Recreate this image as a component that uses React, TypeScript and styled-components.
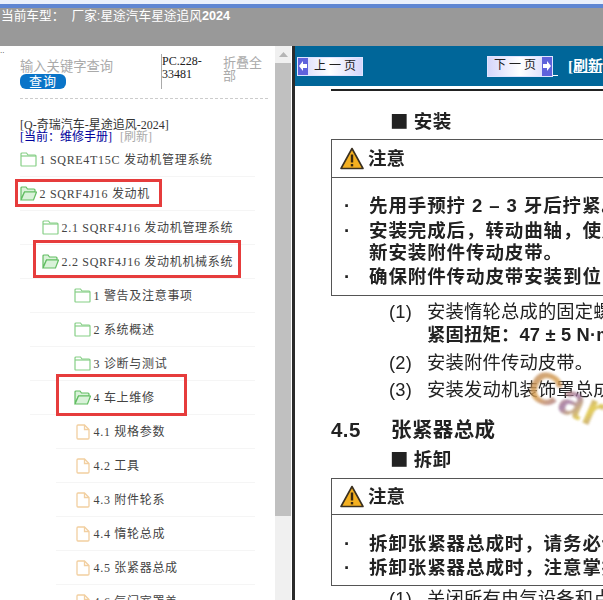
import styled, { createGlobalStyle } from "styled-components";

const GlobalStyle = createGlobalStyle`
  html, body { margin: 0; padding: 0; background: #fff; overflow: hidden; }
  * { box-sizing: border-box; }
`;

const serif = `"Liberation Serif", "Noto Sans CJK SC", serif`;
const sans = `"Liberation Sans", "Noto Sans CJK SC", sans-serif`;
const cjk = `"Noto Sans CJK SC", "Liberation Sans", sans-serif`;

const Screen = styled.div`
  width: 603px;
  height: 600px;
  display: flex;
  flex-direction: column;
  overflow: hidden;
`;

const TitleEdge = styled.div`
  height: 8px;
  flex: none;
  background: linear-gradient(#eaf0fb 0 4px, #5f86d2 4px 8px);
`;

const Header = styled.header`
  height: 38px;
  flex: none;
  background: #999;
  color: #fff;
  font: 12.7px/14px ${sans};
  padding: 1px 0 0 1px;
  white-space: pre;
  b { font-weight: 700; }
`;

const Main = styled.div`
  flex: 1;
  min-height: 0;
  display: flex;
`;

const Sidebar = styled.aside`
  width: 275px;
  flex: none;
  overflow: hidden;
  background: #fff;
  padding: 2px 0 0;
`;

const Dots = styled.div`
  height: 6px;
  font: 8px/6px ${sans};
  color: #333;
`;

const SearchArea = styled.div`
  margin: 0 7px 0 20px;
  height: 45px;
  display: flex;
  border-bottom: 1px dashed #ccc;
`;

const SearchBox = styled.div`
  width: 141px;
  flex: none;
`;

const Placeholder = styled.div`
  font: 13.3px/15px ${sans};
  color: #aaa;
  margin-top: 5px;
`;

const QueryButton = styled.button`
  display: block;
  width: 46px;
  height: 15px;
  border: 0;
  border-radius: 6px;
  padding: 0;
  background: #0a74c8;
  color: #fff;
  font: 13px/15px ${sans};
  letter-spacing: 1px;
`;

const PcCode = styled.div`
  width: 62px;
  height: 35px;
  flex: none;
  border-left: 1px solid #aaa;
  font: 12px/12.5px ${serif};
  color: #222;
  padding-top: 1px;
`;

const Collapse = styled.div`
  width: 40px;
  font: 13px/13px ${sans};
  color: #aaa;
  margin-top: 2px;
`;

const CarInfo = styled.div`
  margin: 20px 0 0 20px;
  height: 24px;
  font: 12px/12px ${serif};
  color: #333;
  white-space: nowrap;
`;

const Current = styled.span`
  color: #00009c;
`;

const Refresh = styled.span`
  color: #aaa;
  margin-left: 8px;
`;

const Tree = styled.ul`
  list-style: none;
  margin: 0;
  padding: 0;
`;

const Row = styled.li<{ $start: number; $indent: number }>`
  position: relative;
  height: 34px;
  margin: 0 20px 0 ${(p) => p.$start}px;
  padding-left: ${(p) => p.$indent}px;
  display: flex;
  align-items: center;
  gap: 2.5px;
  border-bottom: 1px solid #f5f5f5;
  font: 12px/14px ${serif};
  letter-spacing: 0.7px;
  color: #444;
  white-space: nowrap;
`;

const RedBox = styled.span<{ $left: number; $top: number; $w: number; $h: number }>`
  position: absolute;
  left: ${(p) => p.$left}px;
  top: ${(p) => p.$top}px;
  width: ${(p) => p.$w}px;
  height: ${(p) => p.$h}px;
  border: 3px solid #e63c3c;
`;

const Track = styled.div`
  width: 16px;
  flex: none;
  background: #f0f0f0;
  display: flex;
  flex-direction: column;
  align-items: stretch;
`;

const TrackButton = styled.div`
  height: 17px;
  display: flex;
  align-items: center;
  justify-content: center;
`;

const Thumb = styled.div`
  height: 453px;
  background: #c0c0c0;
`;

const Divider = styled.div`
  width: 3px;
  flex: none;
  margin-left: 1px;
  background: #2b2b2b;
`;

const Content = styled.section`
  flex: 1;
  min-width: 0;
  overflow: hidden;
  position: relative;
  background: #fff;
  display: flex;
  flex-direction: column;
`;

const Toolbar = styled.nav`
  height: 40px;
  flex: none;
  background: #006699;
  display: flex;
  align-items: center;
  padding-left: 2px;
`;

const PageButton = styled.button<{ $next?: boolean }>`
  width: 66px;
  height: ${(p) => (p.$next ? 21 : 19)}px;
  flex: none;
  margin: ${(p) => (p.$next ? "0 0 0 124px" : "0")};
  padding: 0;
  display: flex;
  flex-direction: ${(p) => (p.$next ? "row-reverse" : "row")};
  align-items: stretch;
  border: 1px solid #dfe4ff;
  background: linear-gradient(90deg, #d5d6fb, #fff 50%, #d5d6fb);
  color: #222;
  font: 12px/17px ${serif};
  white-space: pre;
`;

const ArrowBox = styled.span`
  width: 10px;
  flex: none;
  background: #5f62dc;
  display: flex;
  align-items: center;
  justify-content: center;
`;

const ButtonLabel = styled.span`
  flex: 1;
  text-align: center;
`;

const LinkStub = styled.span`
  width: 5px;
  height: 1px;
  flex: none;
  align-self: flex-end;
  margin-bottom: 10px;
  background: #fff;
`;

const Reload = styled.a`
  flex: none;
  margin-left: 10px;
  color: #fff;
  font: 700 15px/16px ${serif};
  text-decoration: underline;
  white-space: nowrap;
`;

const Page = styled.div`
  flex: 1;
  padding: 3px 0 0 36px;
  color: #222;
  font-family: ${sans};
  white-space: nowrap;
  filter: blur(0.3px);
`;

const Rule = styled.div`
  height: 2px;
  background: #222;
  margin-bottom: 18px;
`;

const SubHead = styled.h3<{ $after: number }>`
  margin: 0 0 ${(p) => p.$after}px 59px;
  height: 22px;
  font: 700 18.500px/22px ${cjk};
  letter-spacing: 0.5px;
`;

const Notice = styled.div<{ $h: number }>`
  height: ${(p) => p.$h}px;
  border: 1px solid #555;
  border-right: 0;
`;

const NoticeHead = styled.div<{ $h: number }>`
  height: ${(p) => p.$h}px;
  border-bottom: 1px solid #555;
  display: flex;
  align-items: center;
  gap: 4px;
  padding-left: 8px;
  font: 700 18.500px/24px ${sans};
`;

const NoticeBody = styled.ul<{ $top: number }>`
  list-style: none;
  margin: 0;
  padding: ${(p) => p.$top}px 0 0 12px;
`;

const Bullet = styled.li<{ $gap?: number }>`
  display: flex;
  font: 700 18.500px/22px ${sans};
  letter-spacing: 0.9px;
  margin-top: ${(p) => p.$gap ?? 0}px;
  &::before {
    content: "·";
    width: 25px;
    flex: none;
  }
`;

const Step = styled.div<{ $bold?: boolean; $top: number }>`
  display: flex;
  margin: ${(p) => p.$top}px 0 0 58px;
  font: ${(p) => (p.$bold ? 700 : 400)} 18.300px/24px ${sans};
  letter-spacing: 0.2px;
`;

const StepNo = styled.span`
  width: 38px;
  flex: none;
`;

const SectionHead = styled.h2`
  margin: 15px 0 4px;
  display: flex;
  height: 26px;
  font: 700 20.500px/26px ${sans};
  letter-spacing: 0.4px;
`;

const SectionNo = styled.span`
  width: 60px;
  flex: none;
`;

const Watermark = styled.span`
  position: absolute;
  left: 246px;
  top: 312px;
  font: 700 46px/52px ${sans};
  letter-spacing: 1px;
  transform: rotate(24deg);
  transform-origin: left top;
  background: linear-gradient(120deg, #b98a6c, #d9a050 30%, #a075a0 55%, #e0c840 75%, #a075a0);
  -webkit-background-clip: text;
  background-clip: text;
  color: transparent;
  opacity: 0.85;
  filter: blur(0.8px);
`;

function FolderClosed() {
  return (
    <svg width="17" height="15" viewBox="0 0 17 15" fill="none" stroke="#86cf86" strokeWidth="1.2">
      <path d="M1 13.500V2a1 1 0 0 1 1-1h4.500l1.500 2h7a1 1 0 0 1 1 1v9.500a.5.5 0 0 1-.5.5H1.500a.5.5 0 0 1-.5-.5z" />
      <path d="M1 4h15" />
    </svg>
  );
}

function FolderOpen() {
  return (
    <svg width="17" height="15" viewBox="0 0 17 15" fill="#d9f2d9" stroke="#62bd62" strokeWidth="1.2">
      <path d="M1 13.500V2a1 1 0 0 1 1-1h4l1.500 2h6.500a1 1 0 0 1 1 1v2H4.500L1 13.500z" />
      <path d="M1 14h12.500L16.500 6H4.500z" />
    </svg>
  );
}

function FileIcon() {
  return (
    <svg width="15" height="16" viewBox="0 0 15 16" fill="none" stroke="#f2cfa0" strokeWidth="1.300">
      <path d="M1 2a1 1 0 0 1 1-1h6.500L13 5.500V14a1 1 0 0 1-1 1H2a1 1 0 0 1-1-1z" />
      <path d="M8.500 1v4.500H13" />
    </svg>
  );
}

function Warning() {
  return (
    <svg width="24" height="23" viewBox="0 0 24 23">
      <path d="M12 1.500 23 21.500H1z" fill="#f4b020" stroke="#3a3020" strokeWidth="1.600" strokeLinejoin="round" />
      <rect x="10.800" y="7.500" width="2.400" height="8" fill="#3a2a10" />
      <rect x="10.800" y="17" width="2.400" height="2.400" fill="#3a2a10" />
    </svg>
  );
}

function PageArrow({ next }: { next?: boolean }) {
  return (
    <svg width="8" height="10" viewBox="0 0 8 10" fill="#fff">
      <path d={next ? "M0 3h4V0l4 5-4 5V7H0z" : "M8 3H4V0L0 5l4 5V7h4z"} />
    </svg>
  );
}

type Item = {
  label: string;
  icon: "closed" | "open" | "file";
  start: number;
  indent: number;
  box?: { left: number; top: number; w: number; h: number };
};

const items: Item[] = [
  { label: "1 SQRE4T15C 发动机管理系统", icon: "closed", start: 20, indent: 0 },
  { label: "2 SQRF4J16 发动机", icon: "open", start: 20, indent: 0, box: { left: -5, top: 2, w: 147, h: 28 } },
  { label: "2.1 SQRF4J16 发动机管理系统", icon: "closed", start: 20, indent: 22 },
  { label: "2.2 SQRF4J16 发动机机械系统", icon: "open", start: 20, indent: 22, box: { left: 13, top: -5, w: 208, h: 38 } },
  { label: "1 警告及注意事项", icon: "closed", start: 30, indent: 44 },
  { label: "2 系统概述", icon: "closed", start: 30, indent: 44 },
  { label: "3 诊断与测试", icon: "closed", start: 30, indent: 44 },
  { label: "4 车上维修", icon: "open", start: 30, indent: 44, box: { left: 26, top: -7, w: 131, h: 42 } },
  { label: "4.1 规格参数", icon: "file", start: 56, indent: 20 },
  { label: "4.2 工具", icon: "file", start: 56, indent: 20 },
  { label: "4.3 附件轮系", icon: "file", start: 56, indent: 20 },
  { label: "4.4 惰轮总成", icon: "file", start: 56, indent: 20 },
  { label: "4.5 张紧器总成", icon: "file", start: 56, indent: 20 },
  { label: "4.6 气门室罩盖", icon: "file", start: 56, indent: 20 },
];

export default function App() {
  return (
    <Screen>
      <GlobalStyle />
      <TitleEdge />
      <Header>
        当前车型：  厂家:星途汽车星途追风<b>2024</b>
      </Header>
      <Main>
        <Sidebar>
          <Dots>..</Dots>
          <SearchArea>
            <SearchBox>
              <Placeholder>输入关键字查询</Placeholder>
              <QueryButton>查询</QueryButton>
            </SearchBox>
            <PcCode>
              PC.228-
              <br />
              33481
            </PcCode>
            <Collapse>折叠全部</Collapse>
          </SearchArea>
          <CarInfo>
            [Q-奇瑞汽车-星途追风-2024]
            <br />
            <Current>[当前：维修手册]</Current>
            <Refresh>[刷新]</Refresh>
          </CarInfo>
          <Tree>
            {items.map((item) => (
              <Row key={item.label} $start={item.start} $indent={item.indent}>
                {item.icon === "closed" && <FolderClosed />}
                {item.icon === "open" && <FolderOpen />}
                {item.icon === "file" && <FileIcon />}
                <span>{item.label}</span>
                {item.box && <RedBox $left={item.box.left} $top={item.box.top} $w={item.box.w} $h={item.box.h} />}
              </Row>
            ))}
          </Tree>
        </Sidebar>
        <Track>
          <TrackButton>
            <svg width="9" height="5" viewBox="0 0 9 5" fill="#b5b5b5">
              <path d="M4.500 0 9 5H0z" />
            </svg>
          </TrackButton>
          <Thumb />
        </Track>
        <Divider />
        <Content>
          <Toolbar>
            <PageButton>
              <ArrowBox>
                <PageArrow />
              </ArrowBox>
              <ButtonLabel>上 一 页</ButtonLabel>
            </PageButton>
            <PageButton $next>
              <ArrowBox>
                <PageArrow next />
              </ArrowBox>
              <ButtonLabel>下 一 页</ButtonLabel>
            </PageButton>
            <LinkStub />
            <Reload>[刷新]</Reload>
          </Toolbar>
          <Page>
            <Rule />
            <SubHead $after={8}>■ 安装</SubHead>
            <Notice $h={157}>
              <NoticeHead $h={38}>
                <Warning />
                注意
              </NoticeHead>
              <NoticeBody $top={17}>
                <Bullet>先用手预拧 2 – 3 牙后拧紧。</Bullet>
                <Bullet $gap={3}>
                  <span>
                    安装完成后，转动曲轴，使用诊断仪检查
                    <br />
                    新安装附件传动皮带。
                  </span>
                </Bullet>
                <Bullet $gap={2}>确保附件传动皮带安装到位</Bullet>
              </NoticeBody>
            </Notice>
            <Step $top={4}>
              <StepNo>(1)</StepNo>安装惰轮总成的固定螺栓
            </Step>
            <Step $top={-1} $bold>
              <StepNo />紧固扭矩：47 ± 5 N·m
            </Step>
            <Step $top={4}>
              <StepNo>(2)</StepNo>安装附件传动皮带。
            </Step>
            <Step $top={3}>
              <StepNo>(3)</StepNo>安装发动机装饰罩总成
            </Step>
            <SectionHead>
              <SectionNo>4.5</SectionNo>张紧器总成
            </SectionHead>
            <SubHead $after={9}>■ 拆卸</SubHead>
            <Notice $h={108}>
              <NoticeHead $h={36}>
                <Warning />
                注意
              </NoticeHead>
              <NoticeBody $top={18}>
                <Bullet>拆卸张紧器总成时，请务必使用专用</Bullet>
                <Bullet $gap={2}>拆卸张紧器总成时，注意掌握力度</Bullet>
              </NoticeBody>
            </Notice>
            <Step $top={1}>
              <StepNo>(1)</StepNo>关闭所有电气设备和点火开关
            </Step>
          </Page>
          <Watermark>Car</Watermark>
        </Content>
      </Main>
    </Screen>
  );
}
